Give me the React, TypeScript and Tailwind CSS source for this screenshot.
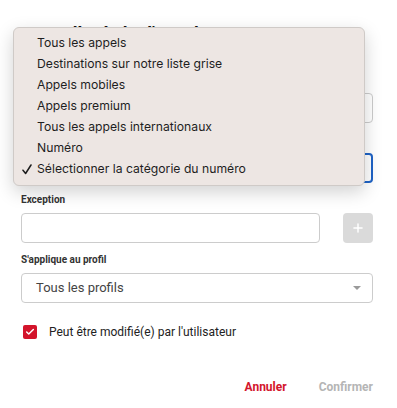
import { Check, Plus } from 'lucide-react';

const OPTIONS = [
  'Tous les appels',
  'Destinations sur notre liste grise',
  'Appels mobiles',
  'Appels premium',
  'Tous les appels internationaux',
  'Numéro',
  'Sélectionner la catégorie du numéro',
];

function FieldLabel({ children }: { children: string }) {
  return <div className="h-[14px] text-[10px] font-bold leading-[14px] text-[#333]">{children}</div>;
}

function Caret() {
  return (
    <svg className="h-[4px] w-[8px]" viewBox="0 0 8 4" aria-hidden="true">
      <path d="M0 0h8L4 4z" fill="#9a9a9a" />
    </svg>
  );
}

/**
 * Native-looking popup list, shown over the form.
 */
function OptionsMenu() {
  return (
    <div className="absolute left-[13px] top-[27px] w-[352px] rounded-[6px] border border-[#cfcac7] bg-[#ede6e3] py-[5px] shadow-[0_6px_18px_rgba(0,0,0,0.18)]">
      {OPTIONS.map((option, index) => (
        <div
          key={index}
          className="relative flex h-[21px] items-center pl-[23px] text-[12.2px] text-[#1e1e1e] [font-family:Inter,'Noto_Sans',sans-serif]"
        >
          {index === OPTIONS.length - 1 && (
            <span className="absolute left-[8px] top-[5px] text-[#1e1e1e]">
              <svg className="h-[11px] w-[10px]" viewBox="0 0 10 11" fill="none" aria-hidden="true">
                <path d="M1 6.2l2.6 3.3L9 1" stroke="currentColor" strokeWidth="1.5" strokeLinecap="round" strokeLinejoin="round" />
              </svg>
            </span>
          )}
          {option}
        </div>
      ))}
    </div>
  );
}

export default function App() {
  return (
    <div className="relative h-[408px] w-[397px] bg-white [font-family:Roboto,'Liberation_Sans',sans-serif]">
      <div className="flex flex-col pl-[21px] pr-[24px] pt-[23px]">
        <h1 className="h-[50px] text-[18px] font-bold leading-[22px] text-[#111]">Nouvelle règle d'appel</h1>

        <div className="flex flex-col gap-[6px]">
          <FieldLabel>Nom</FieldLabel>
          <div className="h-[30px] rounded-[4px] border border-[#cccccc]" />
        </div>

        <div className="mt-[10px] flex flex-col gap-[6px]">
          <FieldLabel>Catégorie</FieldLabel>
          <div className="h-[30px] rounded-[4px] border-2 border-[#1f63c6]" />
        </div>

        <div className="mt-[10px] flex flex-col gap-[6px]">
          <FieldLabel>Exception</FieldLabel>
          <div className="flex gap-[23px]">
            <div className="h-[30px] flex-1 rounded-[4px] border border-[#cccccc]" />
            <button className="flex h-[30px] w-[30px] items-center justify-center rounded-[4px] bg-[#dadada] text-white">
              <Plus className="h-[14px] w-[14px]" strokeWidth={2.5} />
            </button>
          </div>
        </div>

        <div className="mt-[10px] flex flex-col gap-[6px]">
          <FieldLabel>S'applique au profil</FieldLabel>
          <div className="flex h-[30px] items-center justify-between rounded-[4px] border border-[#cccccc] pl-[14px] pr-[11px]">
            <span className="text-[13px] text-[#444]">Tous les profils</span>
            <Caret />
          </div>
        </div>

        <label className="mt-[20px] flex items-center gap-[12px] pl-[2px]">
          <span className="flex h-[14px] w-[14px] items-center justify-center rounded-[2px] bg-[#d3142b] text-white">
            <Check className="h-[10px] w-[10px]" strokeWidth={3.5} />
          </span>
          <span className="text-[12px] text-[#222]">Peut être modifié(e) par l'utilisateur</span>
        </label>

        <div className="mt-[37px] flex justify-end gap-[32px] text-[12px] font-bold">
          <button className="text-[#d3142b]">Annuler</button>
          <button className="text-[#b5b5b5]">Confirmer</button>
        </div>
      </div>

      <OptionsMenu />
    </div>
  );
}
